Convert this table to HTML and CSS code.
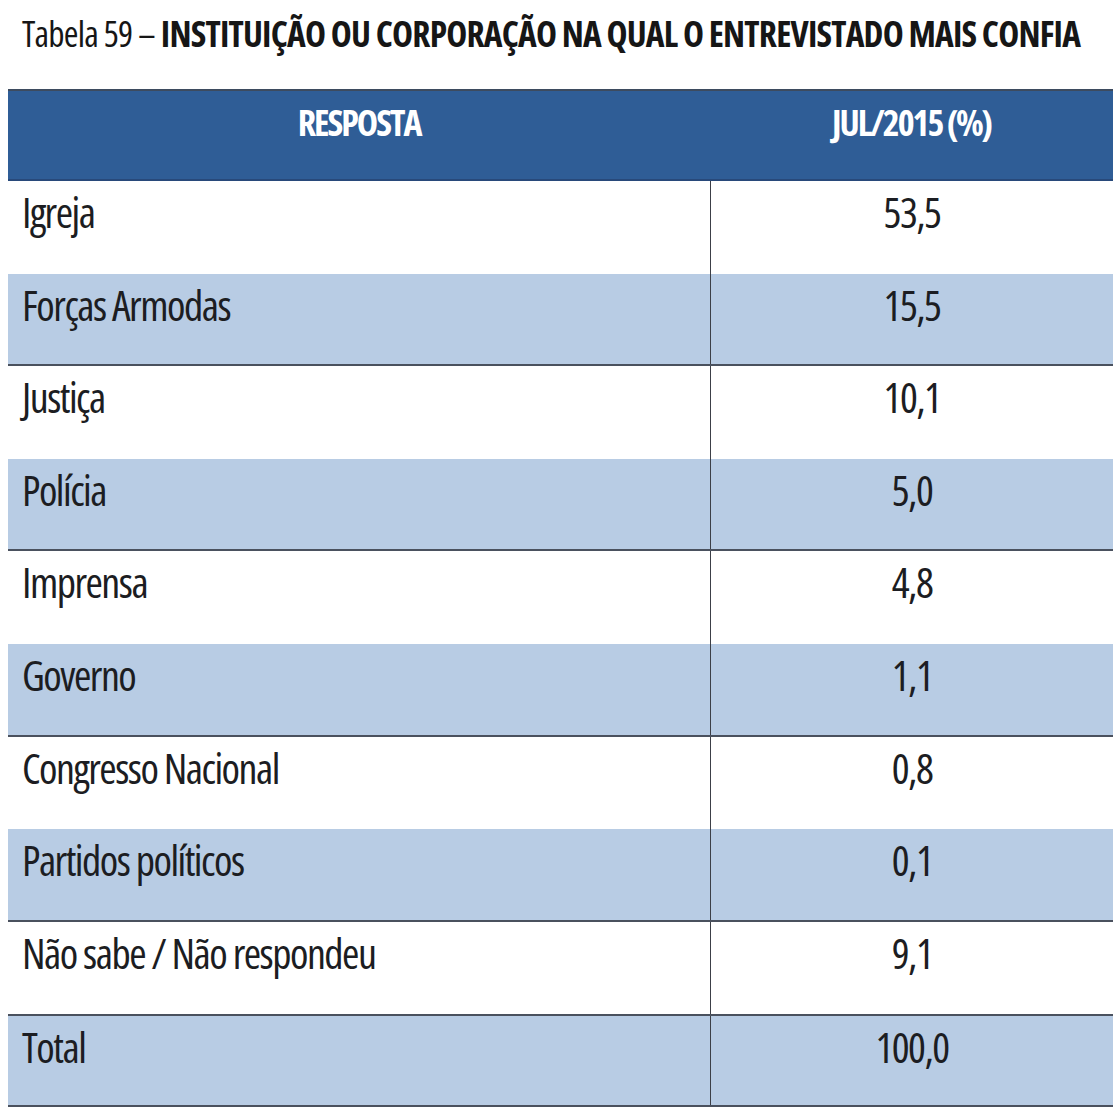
FILE: index.html
```html
<!DOCTYPE html>
<html lang="pt-BR">
<head>
<meta charset="utf-8">
<title>Tabela 59</title>
<link rel="stylesheet" href="styles.css">
</head>
<body>
<h1 class="title"><span class="title-num">Tabela 59 – </span><span class="title-main">INSTITUIÇÃO OU CORPORAÇÃO NA QUAL O ENTREVISTADO MAIS CONFIA</span></h1>
<div class="table">
  <div class="row head">
    <div class="cell label">RESPOSTA</div>
    <div class="cell value">JUL/2015 (%)</div>
  </div>
  <div class="row">
    <div class="cell label">Igreja</div>
    <div class="cell value">53,5</div>
  </div>
  <div class="row shade">
    <div class="cell label">Forças Armodas</div>
    <div class="cell value">15,5</div>
  </div>
  <div class="row">
    <div class="cell label">Justiça</div>
    <div class="cell value">10,1</div>
  </div>
  <div class="row shade">
    <div class="cell label">Polícia</div>
    <div class="cell value">5,0</div>
  </div>
  <div class="row">
    <div class="cell label">Imprensa</div>
    <div class="cell value">4,8</div>
  </div>
  <div class="row shade">
    <div class="cell label">Governo</div>
    <div class="cell value">1,1</div>
  </div>
  <div class="row">
    <div class="cell label">Congresso Nacional</div>
    <div class="cell value">0,8</div>
  </div>
  <div class="row shade">
    <div class="cell label">Partidos políticos</div>
    <div class="cell value">0,1</div>
  </div>
  <div class="row">
    <div class="cell label">Não sabe / Não respondeu</div>
    <div class="cell value">9,1</div>
  </div>
  <div class="row shade total">
    <div class="cell label">Total</div>
    <div class="cell value">100,0</div>
  </div>
</div>
</body>
</html>
```
FILE: styles.css
```css
html, body {
  margin: 0;
  padding: 0;
  background: #ffffff;
}

body {
  width: 1120px;
  height: 1120px;
  overflow: hidden;
  font-family: "Open Sans", "Liberation Sans", sans-serif;
  font-stretch: 75%;
  color: #1c1d22;
}

.title {
  margin: 15px 0 38px 0;
  padding-left: 22px;
  font-size: 35.5px;
  line-height: 36px;
  font-weight: normal;
  letter-spacing: -0.8px;
  white-space: nowrap;
  color: #161616;
}

.title-main {
  font-weight: bold;
}

.table {
  margin-left: 8px;
  width: 1105px;
}

.row {
  display: grid;
  grid-template-columns: 702px 1fr;
  height: 92.6px;
  box-sizing: border-box;
  font-size: 42px;
  line-height: 42px;
  letter-spacing: -1.5px;
}

.cell {
  padding-top: 10px;
  white-space: nowrap;
}

.label {
  padding-left: 14px;
}

.value {
  text-align: center;
  border-left: 1px solid #3c3f47;
}

.shade {
  background: #b8cce4;
  border-bottom: 2px solid #4a515e;
}

.head {
  height: 92px;
  background: #2f5d96;
  border-top: 2px solid #3d4b5f;
  border-bottom: 2px solid #28497a;
  color: #ffffff;
  font-weight: bold;
  font-size: 36px;
  line-height: 36px;
  letter-spacing: -2px;
}

.head .cell {
  padding-top: 14px;
  text-align: center;
}

.head .label {
  padding-left: 0;
}

.head .value {
  border-left: none;
}

.total {
  border-top: 2px solid #4a515e;
}
```
